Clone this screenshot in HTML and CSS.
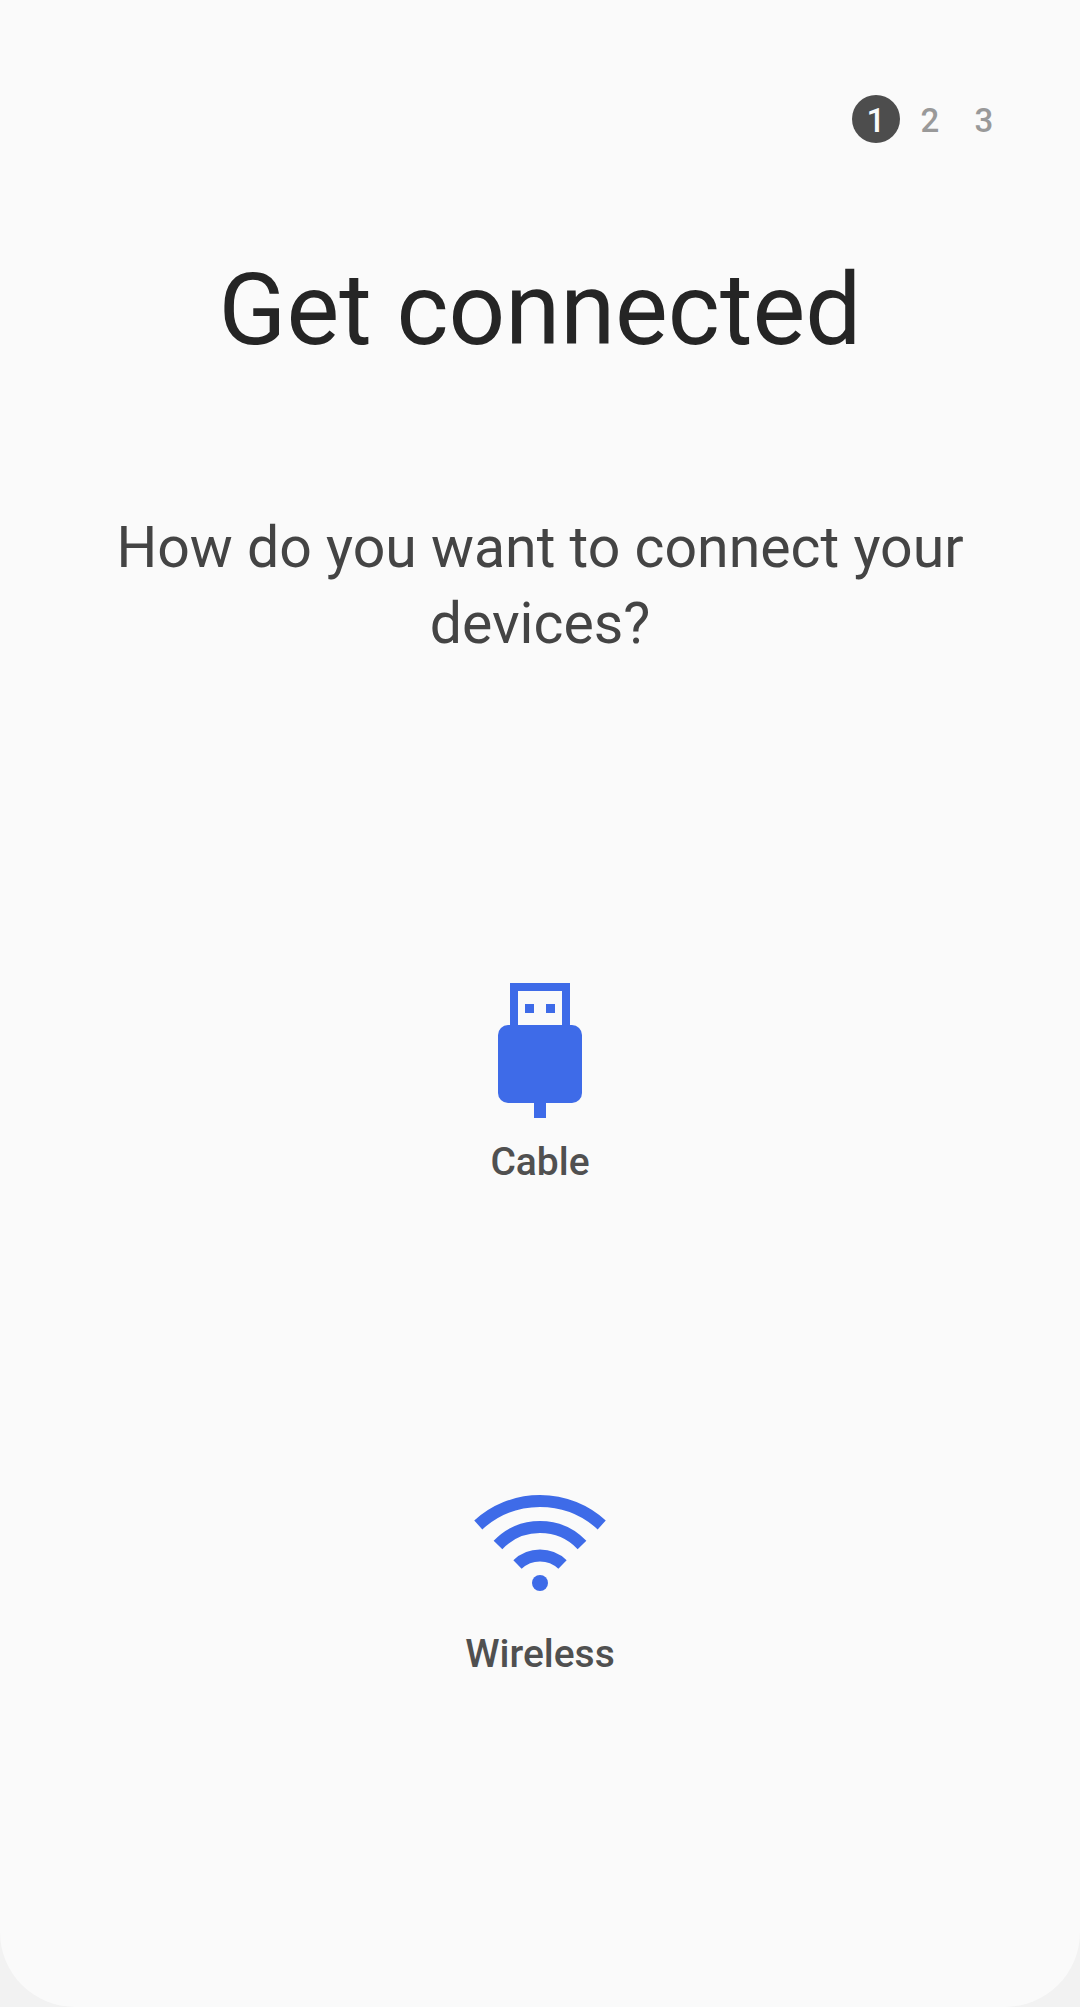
FILE: index.html
```html
<!DOCTYPE html>
<html lang="en">
<head>
    <meta charset="UTF-8">
    <meta name="viewport" content="width=device-width, initial-scale=1.0">
    <title>Get connected</title>
    <link rel="stylesheet" href="styles.css">
</head>
<body>
    <div class="screen">
        <div class="steps">
            <span class="step active">1</span>
            <span class="step">2</span>
            <span class="step">3</span>
        </div>
        <h1 class="title">Get connected</h1>
        <p class="question">How do you want to connect your devices?</p>
        <div class="options">
            <div class="option cable">
                <svg class="icon" width="84" height="135" viewBox="0 0 84 135">
                    <path class="fill" fill-rule="evenodd" d="M12 0H72V42H12ZM20 8V42H64V8ZM27 21H36V30H27ZM48 21H57V30H48Z"/>
                    <rect class="fill" x="0" y="42" width="84" height="78" rx="10"/>
                    <rect class="fill" x="36" y="118" width="12" height="17"/>
                </svg>
                <span class="label">Cable</span>
            </div>
            <div class="option wireless">
                <svg class="icon" width="136" height="100" viewBox="0 0 136 100">
                    <path class="arc" d="M6.300 34A91.300 91.300 0 0 1 129.700 34"/>
                    <path class="arc" d="M26 54A58 58 0 0 1 110 54"/>
                    <path class="arc" d="M45.500 73.500A32.600 32.600 0 0 1 90.500 73.500"/>
                    <circle class="fill" cx="68" cy="92" r="8"/>
                </svg>
                <span class="label">Wireless</span>
            </div>
        </div>
    </div>
</body>
</html>
```
FILE: styles.css
```css
html, body {
    margin: 0;
    padding: 0;
    height: 100%;
    background-color: #f2f2f2;
}
body {
    font-family: Roboto, sans-serif;
}
.screen {
    box-sizing: border-box;
    height: 2007px;
    padding-top: 95px;
    background-color: #fafafa;
    border-radius: 0 0 75px 75px;
    text-align: center;
}
.steps {
    display: flex;
    justify-content: flex-end;
    gap: 6px;
    padding-right: 72px;
}
.step {
    width: 48px;
    height: 48px;
    line-height: 51px;
    border-radius: 50%;
    font-size: 33px;
    font-weight: 500;
    color: #999999;
}
.step.active {
    background-color: #4d4d4d;
    color: #fafafa;
}
.title {
    margin: 111px 0 0;
    font-size: 99.500px;
    line-height: 112px;
    font-weight: 400;
    color: #252525;
}
.question {
    margin: 144px auto 0;
    width: 900px;
    font-size: 57.200px;
    line-height: 76px;
    color: #444444;
}
.options {
    margin-top: 321px;
}
.option {
    display: flex;
    flex-direction: column;
    align-items: center;
}
.wireless {
    margin-top: 306px;
}
.label {
    font-size: 39px;
    line-height: 46px;
    font-weight: 500;
    color: #505050;
}
.cable .label {
    margin-top: 21px;
}
.wireless .label {
    margin-top: 40px;
}
.icon {
    display: block;
}
.fill {
    fill: #3e6be8;
}
.arc {
    fill: none;
    stroke: #3e6be8;
    stroke-width: 12;
}
```
